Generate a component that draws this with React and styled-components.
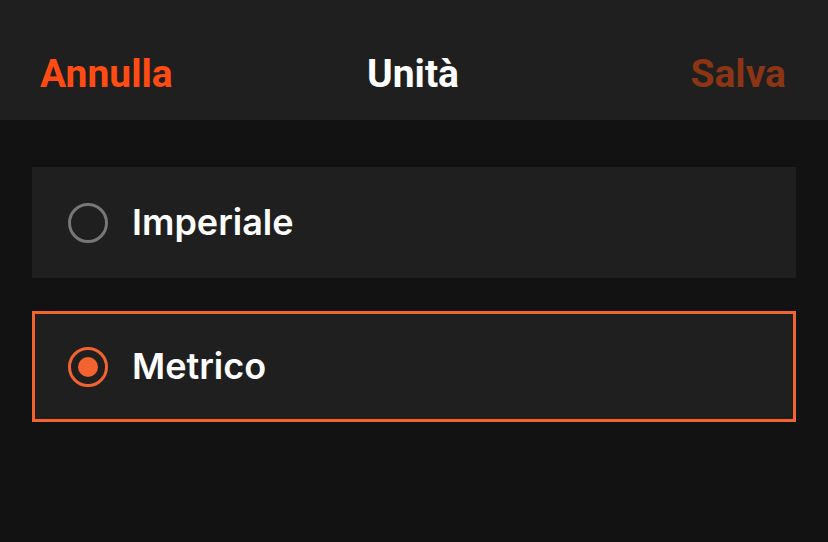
import React, { useState } from 'react';
import styled, { createGlobalStyle } from 'styled-components';

const GlobalStyle = createGlobalStyle`
  html, body {
    margin: 0;
    padding: 0;
    background: #121212;
  }
  body {
    font-family: Inter, "Noto Sans", sans-serif;
  }
`;

const Page = styled.div`
  width: 828px;
  height: 542px;
  background: #121212;
  display: flex;
  flex-direction: column;
`;

const Header = styled.header`
  height: 120px;
  background: #1f1f1f;
  display: grid;
  grid-template-columns: 1fr auto 1fr;
  align-items: center;
  padding: 28px 42px 0 40px;
  box-sizing: border-box;
`;

const HeaderButton = styled.button`
  background: none;
  border: none;
  padding: 0;
  font-family: Roboto, "Liberation Sans", sans-serif;
  font-weight: 700;
  font-size: 39px;
  color: ${({ disabled }) => (disabled ? '#8b3416' : '#ff4c14')};
  justify-self: ${({ align }) => align};
  cursor: pointer;
`;

const Title = styled.h1`
  margin: 0;
  font-family: Roboto, "Liberation Sans", sans-serif;
  font-weight: 700;
  font-size: 39px;
  color: #ffffff;
`;

const List = styled.div`
  display: flex;
  flex-direction: column;
  gap: 33px;
  padding: 47px 32px 0;
`;

const Option = styled.div`
  height: 111px;
  box-sizing: border-box;
  background: #1f1f1f;
  border: 3px solid ${({ selected }) => (selected ? '#f26330' : 'transparent')};
  display: flex;
  align-items: center;
  gap: 24px;
  padding-left: 33px;
  cursor: pointer;
`;

const Radio = styled.span`
  width: 40px;
  height: 40px;
  box-sizing: border-box;
  border-radius: 50%;
  border: 3.5px solid ${({ selected }) => (selected ? '#f26330' : '#777777')};
  display: flex;
  align-items: center;
  justify-content: center;
  flex-shrink: 0;

  &::after {
    content: '';
    width: 20px;
    height: 20px;
    border-radius: 50%;
    background: #f26330;
    display: ${({ selected }) => (selected ? 'block' : 'none')};
  }
`;

const Label = styled.span`
  font-family: Inter, "Noto Sans", sans-serif;
  font-weight: 600;
  font-size: 36px;
  color: #ffffff;
  margin-top: -2px;
`;

const options = [
  { id: 'imperial', label: 'Imperiale' },
  { id: 'metric', label: 'Metrico' },
];

export default function App() {
  const [unit, setUnit] = useState('metric');

  return (
    <>
      <GlobalStyle />
      <Page>
        <Header>
          <HeaderButton align="start">Annulla</HeaderButton>
          <Title>Unità</Title>
          <HeaderButton align="end" disabled>
            Salva
          </HeaderButton>
        </Header>
        <List>
          {options.map((o) => (
            <Option
              key={o.id}
              selected={unit === o.id}
              onClick={() => setUnit(o.id)}
            >
              <Radio selected={unit === o.id} />
              <Label>{o.label}</Label>
            </Option>
          ))}
        </List>
      </Page>
    </>
  );
}
